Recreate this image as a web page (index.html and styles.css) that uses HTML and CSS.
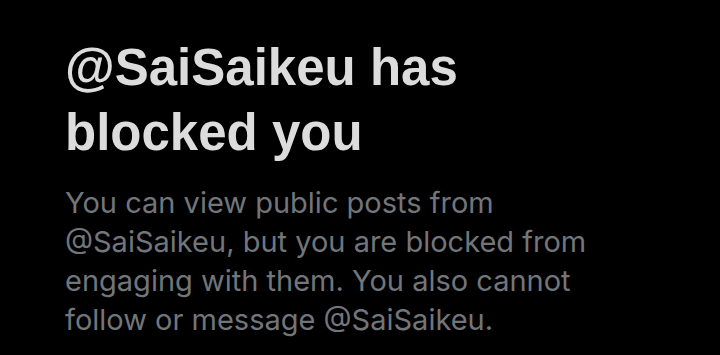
FILE: index.html
```html
<!DOCTYPE html>
<html lang="en">
<head>
    <meta charset="UTF-8">
    <meta name="viewport" content="width=device-width, initial-scale=1.0">
    <title>Blocked</title>
    <link rel="stylesheet" href="styles.css">
</head>
<body>
    <div class="blocked">
        <h1 class="blocked-title">@SaiSaikeu has blocked you</h1>
        <p class="blocked-text">You can view public posts from @SaiSaikeu, but you are blocked from engaging with them. You also cannot follow or message @SaiSaikeu.</p>
    </div>
</body>
</html>
```

FILE: styles.css
```css
* {
    margin: 0;
    padding: 0;
    box-sizing: border-box;
}

body {
    background: #000;
    font-family: Inter, Roboto, sans-serif;
    width: 720px;
    height: 355px;
    overflow: hidden;
}

.blocked {
    padding: 35px 0 0 65px;
    width: 600px;
}

.blocked-title {
    font-family: 'Liberation Sans', Arial, sans-serif;
    font-size: 51px;
    font-weight: bold;
    line-height: 65px;
    color: #dcdcdc;
    margin-bottom: 18px;
}

.blocked-text {
    font-size: 29px;
    line-height: 39px;
    color: #72767b;
}
```
